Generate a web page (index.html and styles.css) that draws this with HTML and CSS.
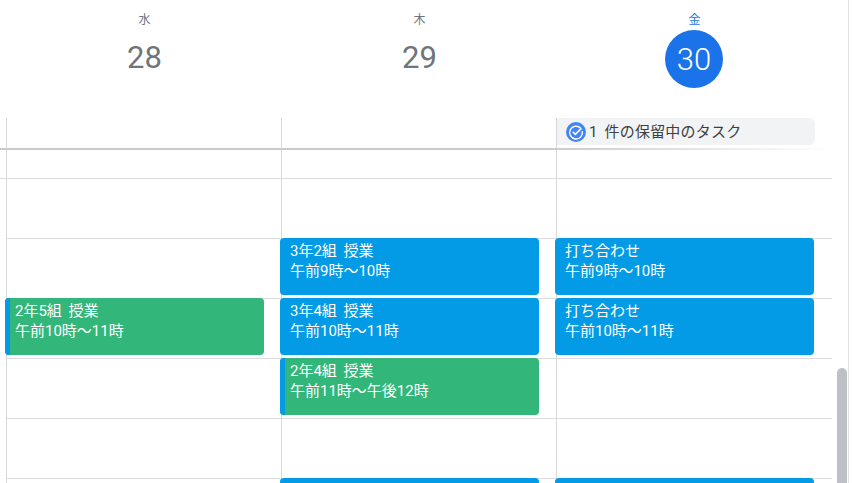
FILE: index.html
```html
<!DOCTYPE html>
<html lang="ja">
<head>
<meta charset="utf-8">
<title>カレンダー</title>
<link rel="stylesheet" href="styles.css">
</head>
<body>
<div class="app">
  <main class="calendar">
    <header class="days">
      <div class="day"><span class="dow">水</span><span class="date">28</span></div>
      <div class="day"><span class="dow">木</span><span class="date">29</span></div>
      <div class="day today"><span class="dow">金</span><span class="date">30</span></div>
    </header>
    <section class="allday">
      <div class="allday-cell"></div>
      <div class="allday-cell"></div>
      <div class="allday-cell">
        <div class="task-chip">
          <svg class="task-icon" viewBox="0 0 20 20" width="20" height="20" aria-hidden="true">
            <circle cx="10" cy="10" r="10" fill="#4285f4"/>
            <path d="M14.6 6.1A6.4 6.4 0 1 0 16.3 9.2" fill="none" stroke="#fff" stroke-width="1.4"/>
            <path d="M6.7 9.8l2.6 2.6L15.4 6.4" fill="none" stroke="#fff" stroke-width="1.5"/>
          </svg>
          <span class="task-label">1 件の保留中のタスク</span>
        </div>
      </div>
    </section>
    <section class="times">
      <div class="column">
        <div class="slot short"></div>
        <div class="slot"></div>
        <div class="slot"><div class="event green"><span class="strip"></span><div class="text"><div>2年5組 授業</div><div>午前10時～11時</div></div></div></div>
        <div class="slot"></div>
        <div class="slot"></div>
        <div class="slot"></div>
      </div>
      <div class="column">
        <div class="slot short"></div>
        <div class="slot"><div class="event blue"><div class="text"><div>3年2組 授業</div><div>午前9時～10時</div></div></div></div>
        <div class="slot"><div class="event blue"><div class="text"><div>3年4組 授業</div><div>午前10時～11時</div></div></div></div>
        <div class="slot"><div class="event green"><span class="strip"></span><div class="text"><div>2年4組 授業</div><div>午前11時～午後12時</div></div></div></div>
        <div class="slot"></div>
        <div class="slot"><div class="event blue"></div></div>
      </div>
      <div class="column">
        <div class="slot short"></div>
        <div class="slot"><div class="event blue"><div class="text"><div>打ち合わせ</div><div>午前9時～10時</div></div></div></div>
        <div class="slot"><div class="event blue"><div class="text"><div>打ち合わせ</div><div>午前10時～11時</div></div></div></div>
        <div class="slot"></div>
        <div class="slot"></div>
        <div class="slot"><div class="event blue"></div></div>
      </div>
    </section>
  </main>
  <aside class="scroll-track"><div class="scroll-thumb"></div></aside>
</div>
</body>
</html>
```
FILE: styles.css
```css
* { box-sizing: border-box; }
html, body {
  margin: 0;
  height: 100%;
  overflow: hidden;
  background: #fff;
  font-family: Roboto, "Noto Sans CJK JP", sans-serif;
}
.app {
  display: flex;
  width: 853px;
  height: 483px;
  overflow: hidden;
}
.calendar {
  width: 832px;
  flex: none;
}
.days {
  display: flex;
  height: 118px;
  padding-left: 7px;
}
.day {
  width: 275px;
  flex: none;
  display: flex;
  flex-direction: column;
  align-items: center;
  padding-top: 12px;
}
.dow {
  font-size: 12px;
  line-height: 16px;
  height: 16px;
  color: #70757a;
}
.date {
  width: 58px;
  height: 54px;
  margin-top: 2px;
  border-radius: 50%;
  display: flex;
  align-items: center;
  justify-content: center;
  font-size: 31px;
  color: #70757a;
}
.today .dow { color: #1a73e8; }
.today .date {
  height: 58px;
  margin-top: 2px;
  margin-right: 1px;
  background: #1a73e8;
  color: #fff;
  font-weight: 300;
}
.allday {
  display: flex;
  height: 30px;
  padding-left: 6px;
}
.allday-cell {
  width: 275px;
  flex: none;
  border-left: 1px solid #d6d8db;
}
.allday-cell:last-child { width: 270px; }
.task-chip {
  display: flex;
  align-items: center;
  gap: 3px;
  width: 258px;
  height: 27px;
  padding-left: 9px;
  border-radius: 0 6px 6px 0;
  background: #f1f3f4;
  color: #3c4043;
  font-size: 15px;
  letter-spacing: 0.2px;
  word-spacing: 3px;
}
.task-icon {
  flex: none;
  margin-top: 1px;
}
.task-label { margin-top: -3px; }
.times {
  display: flex;
  padding-left: 6px;
  position: relative;
}
.times::before {
  content: "";
  position: absolute;
  left: 0;
  right: 0;
  top: 0;
  height: 2px;
  background: linear-gradient(to right, #c8cacc 0, #c8cacc 66%, rgba(200, 202, 204, 0) 100%);
}
.times::after {
  content: "";
  position: absolute;
  left: 0;
  right: 0;
  top: 30px;
  height: 1px;
  background: #dadce0;
}
.column {
  width: 275px;
  flex: none;
  border-left: 1px solid #d6d8db;
}
.column:last-child { width: 276px; }
.slot {
  display: flex;
  align-items: flex-start;
  height: 60px;
  border-bottom: 1px solid #dadce0;
}
.slot.short { height: 91px; }
.event {
  display: flex;
  flex: none;
  width: 259px;
  height: 57px;
  margin-left: -2px;
  margin-top: -1px;
  border-radius: 4px;
  overflow: hidden;
  color: #fff;
  font-size: 15px;
  line-height: 20px;
  word-spacing: 3px;
  position: relative;
  z-index: 1;
}
.event.blue { background: #039be5; }
.event.green { background: #33b679; }
.strip {
  width: 5px;
  flex: none;
  background: #039be5;
}
.text {
  padding: 3px 0 0 10px;
  white-space: nowrap;
}
.green .text { padding-left: 5px; }
.scroll-track {
  flex: none;
  width: 17px;
  border-right: 1px solid #e2e3e5;
  padding: 368px 1px 0 5px;
  height: 483px;
}
.scroll-thumb {
  width: 10px;
  height: 115px;
  background: #bdc1c6;
  border-radius: 5px 5px 0 0;
}
```
